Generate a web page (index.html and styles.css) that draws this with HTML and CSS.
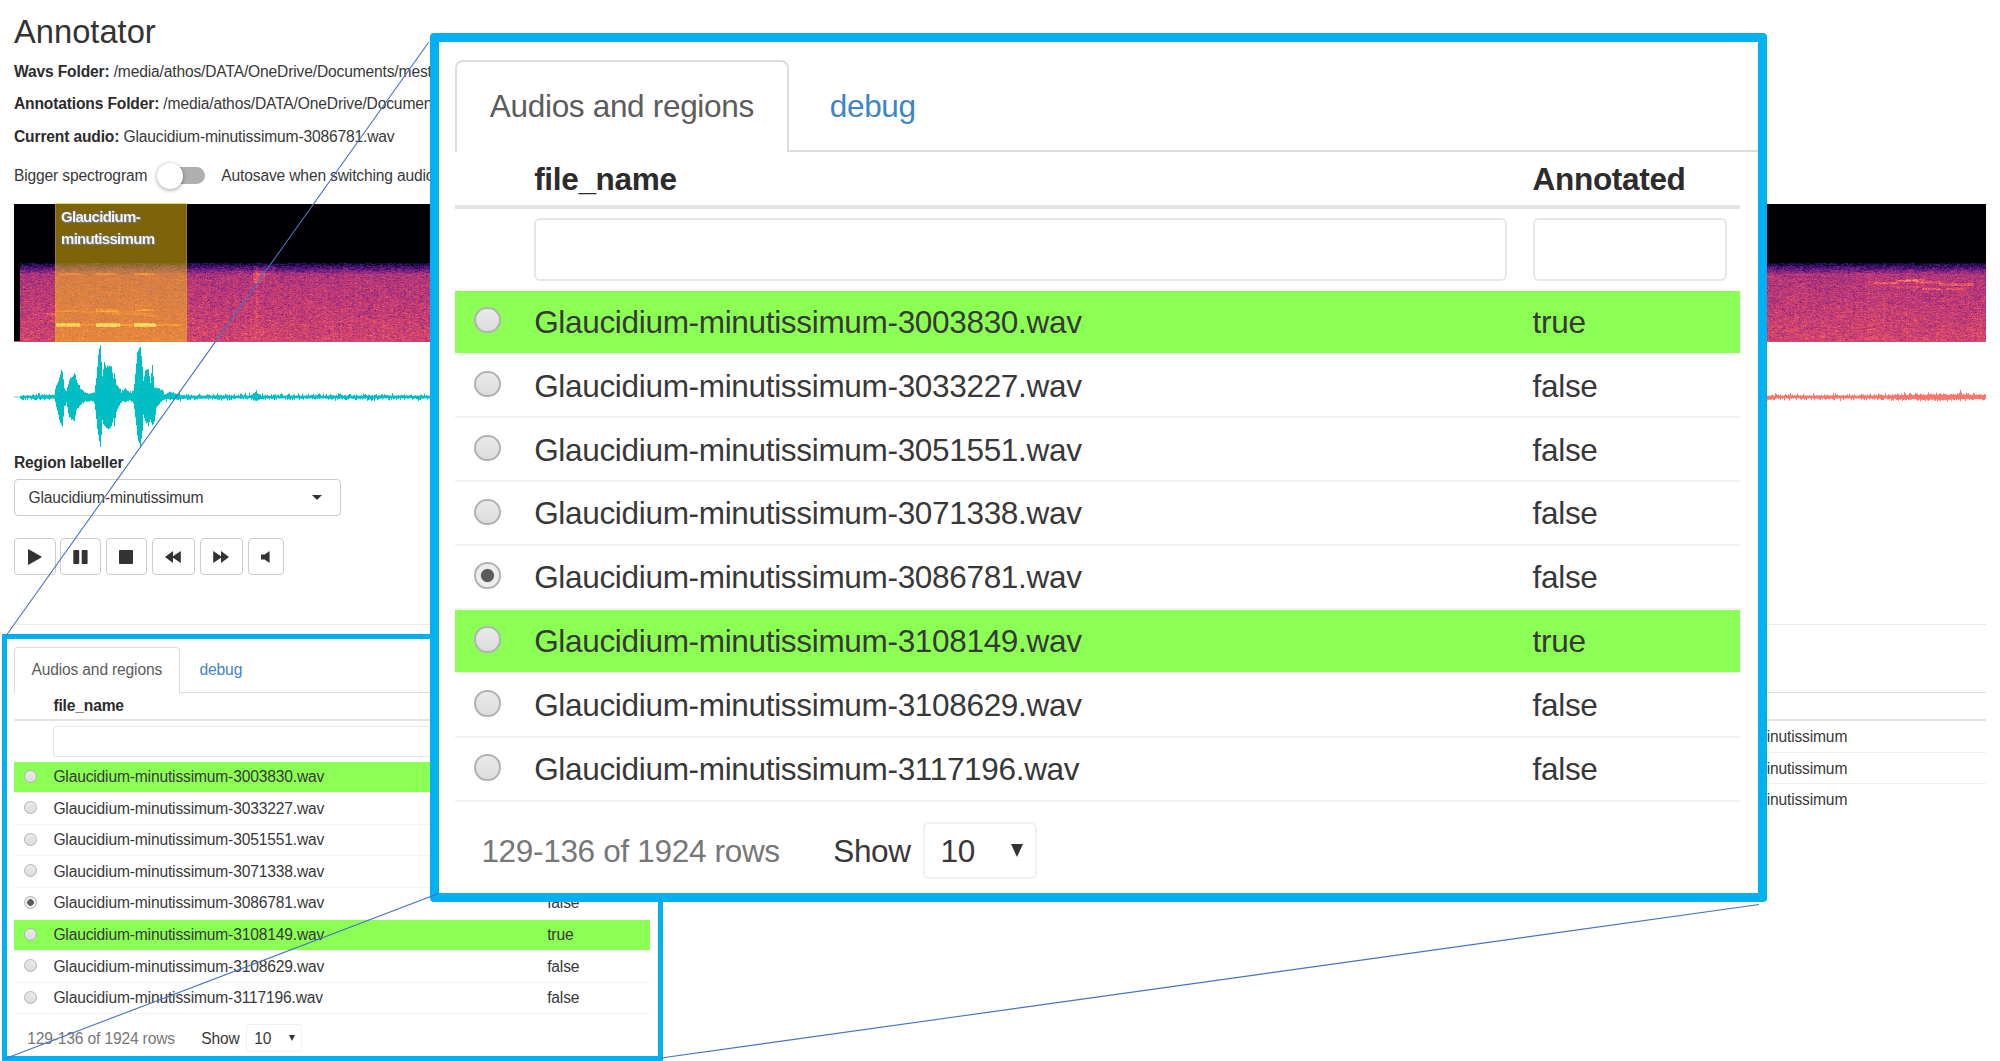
FILE: index.html
```html
<!DOCTYPE html>
<html lang="en">
<head>
<meta charset="utf-8">
<title>Annotator</title>
<link rel="stylesheet" href="styles.css">
</head>
<body>
<main class="page">
  <h1>Annotator</h1>
  <p class="info"><b>Wavs Folder:</b> /media/athos/DATA/OneDrive/Documents/mest</p>
  <p class="info"><b>Annotations Folder:</b> /media/athos/DATA/OneDrive/Documen</p>
  <p class="info"><b>Current audio:</b> Glaucidium-minutissimum-3086781.wav</p>
  <div class="toggles">
    <span>Bigger spectrogram</span>
    <span class="switch"><span class="knob"></span></span>
    <span class="autosave">Autosave when switching audio</span>
  </div>
  <div class="spectrogram">
    <canvas id="spectrogram" width="1972" height="138"></canvas>
    <div class="region">Glaucidium-<br>minutissimum</div>
  </div>
  <canvas id="waveform" class="waveform" width="1972" height="106"></canvas>
  <label class="labeller">Region labeller</label>
  <div class="picker"><span>Glaucidium-minutissimum</span><span class="caret"></span></div>
  <div class="controls">
    <button class="btn w1"><svg width="15" height="16" viewBox="0 0 15 16"><path d="M1 .5Q1 0 1.6.3L14.3 7.5Q15 8 14.3 8.5L1.6 15.7Q1 16 1 15.4Z"/></svg></button>
    <button class="btn w2"><svg width="15" height="14" viewBox="0 0 15 14"><rect x=".3" width="5.9" height="14" rx=".8"/><rect x="8.7" width="5.9" height="14" rx=".8"/></svg></button>
    <button class="btn w1"><svg width="14" height="14" viewBox="0 0 14 14"><rect width="14" height="14" rx=".8"/></svg></button>
    <button class="btn w3"><svg width="16" height="12" viewBox="0 0 16 12"><path d="M0 6 8 0V5.2L15.8 0V12L8 6.8V12Z"/></svg></button>
    <button class="btn w3"><svg width="16" height="12" viewBox="0 0 16 12"><path d="M16 6 8 0V5.2L.2 0V12L8 6.8V12Z"/></svg></button>
    <button class="btn w4"><svg width="9" height="12" viewBox="0 0 9 12"><path d="M0 3.4H3.6L8.6 0V12L3.6 8.6H0Z"/></svg></button>
  </div>
  <hr>
  <section class="panel main-panel">
    <div class="tabs"><span class="tab active">Audios and regions</span><span class="tab">debug</span></div>
    <div class="columns">
      <div class="audio-table">
        <div class="row head"><span></span><b>file_name</b><b>Annotated</b></div>
        <div class="row filter"><span></span><i class="field"></i><i class="field"></i></div>
        <div class="row item done"><i class="radio"></i><span>Glaucidium-minutissimum-3003830.wav</span><span>true</span></div>
        <div class="row item"><i class="radio"></i><span>Glaucidium-minutissimum-3033227.wav</span><span>false</span></div>
        <div class="row item"><i class="radio"></i><span>Glaucidium-minutissimum-3051551.wav</span><span>false</span></div>
        <div class="row item"><i class="radio"></i><span>Glaucidium-minutissimum-3071338.wav</span><span>false</span></div>
        <div class="row item"><i class="radio checked"></i><span>Glaucidium-minutissimum-3086781.wav</span><span>false</span></div>
        <div class="row item done"><i class="radio"></i><span>Glaucidium-minutissimum-3108149.wav</span><span>true</span></div>
        <div class="row item"><i class="radio"></i><span>Glaucidium-minutissimum-3108629.wav</span><span>false</span></div>
        <div class="row item"><i class="radio"></i><span>Glaucidium-minutissimum-3117196.wav</span><span>false</span></div>
        <div class="pager"><span class="count">129-136 of 1924 rows</span><span>Show</span><span class="size">10<i class="arrow"></i></span></div>
      </div>
      <div class="label-table">
        <div class="label-head"></div>
        <div class="label-row">inutissimum</div>
        <div class="label-row">inutissimum</div>
        <div class="label-row">inutissimum</div>
      </div>
    </div>
  </section>
</main>

<div class="marker"></div>

<div class="callout">
  <section class="panel zoomed">
    <div class="tabs"><span class="tab active">Audios and regions</span><span class="tab">debug</span></div>
    <div class="audio-table">
      <div class="row head"><span></span><b>file_name</b><b>Annotated</b></div>
      <div class="row filter"><span></span><i class="field"></i><i class="field"></i></div>
      <div class="row item done"><i class="radio"></i><span>Glaucidium-minutissimum-3003830.wav</span><span>true</span></div>
      <div class="row item"><i class="radio"></i><span>Glaucidium-minutissimum-3033227.wav</span><span>false</span></div>
      <div class="row item"><i class="radio"></i><span>Glaucidium-minutissimum-3051551.wav</span><span>false</span></div>
      <div class="row item"><i class="radio"></i><span>Glaucidium-minutissimum-3071338.wav</span><span>false</span></div>
      <div class="row item"><i class="radio checked"></i><span>Glaucidium-minutissimum-3086781.wav</span><span>false</span></div>
      <div class="row item done"><i class="radio"></i><span>Glaucidium-minutissimum-3108149.wav</span><span>true</span></div>
      <div class="row item"><i class="radio"></i><span>Glaucidium-minutissimum-3108629.wav</span><span>false</span></div>
      <div class="row item"><i class="radio"></i><span>Glaucidium-minutissimum-3117196.wav</span><span>false</span></div>
      <div class="pager"><span class="count">129-136 of 1924 rows</span><span>Show</span><span class="size">10<i class="arrow"></i></span></div>
    </div>
  </section>
</div>

<svg class="guides" width="2000" height="1061" viewBox="0 0 2000 1061">
  <path d="M5.5 636.5 428.5 42.5M5.5 1058.5 438.5 893.5M661 1058 1759 904.5"/>
</svg>
<script src="plots.js"></script>
</body>
</html>
```
FILE: styles.css
```css
* { box-sizing: border-box; }
html, body { height: 100%; }
body {
  margin: 0;
  position: relative;
  overflow: hidden;
  background: #fff;
  color: #383838;
  font: 15.6px/21.76px "Liberation Sans", Arial, sans-serif;
  letter-spacing: -.155px;
}
.page { padding: 13.9px 14px 0; height: 1061px; overflow: hidden; }
h1 { margin: 0 0 11px; font-size: 32.7px; line-height: 35.9px; font-weight: 400; letter-spacing: 0; color: #333; }
.info { margin: 0 0 10.88px; white-space: nowrap; }
b, .labeller { color: #2c2c2c; }

.toggles { display: flex; align-items: center; height: 27px; margin-top: 14.5px; white-space: nowrap; }
.switch { width: 41px; height: 17px; margin-left: 17px; border-radius: 9px; background: #b0b0b0; display: flex; align-items: center; }
.knob { flex: none; width: 26px; height: 26px; margin-left: -7px; border-radius: 50%; background: #fff; box-shadow: 0 1px 4px rgba(0, 0, 0, .4); }
.autosave { margin-left: 16px; }

.spectrogram { position: relative; height: 138px; margin-top: 14.6px; }
.spectrogram canvas, .waveform { display: block; }
.region {
  position: absolute; left: 40.5px; top: -1px; width: 132px; height: 139px;
  padding: 2px 5.5px;
  background: rgba(250, 200, 15, .5);
  border: solid rgba(220, 175, 20, .35); border-width: 1px 1px 0;
  color: #f4f4f4; font-weight: 700; font-size: 15px; letter-spacing: -.7px;
  text-shadow: 0 0 2px #666, 0 0 3px #777, 1px 1px 1px #888;
}
.waveform { margin-top: 2.3px; }

.labeller { display: block; margin-top: 2px; height: 27px; font-weight: 700; }
.picker { display: flex; align-items: center; justify-content: space-between; width: 327px; height: 37px; padding: 0 18px 0 13.5px; border: 1px solid #ccc; border-radius: 4px; }
.caret { border: 5.5px solid transparent; border-top-color: #333; border-bottom: 0; }
.controls { display: flex; gap: 4.6px; margin-top: 22px; }
.btn { display: flex; align-items: center; justify-content: center; height: 37px; padding: 0; border: 1px solid #ccc; border-radius: 4px; background: #fff; fill: #333; }
.w1 { width: 41.5px; }
.w2 { width: 41px; }
.w3 { width: 43.3px; }
.w4 { width: 36px; }
hr { margin: 49px 0 22px; height: 1px; border: 0; background: #eaeaea; }

/* File table, sized in multiples of --s so it can be shown at any scale */
.panel { --s: 1px; font-size: calc(15.6 * var(--s)); line-height: calc(21.76 * var(--s)); letter-spacing: -.0105em; white-space: nowrap; }
.tabs { display: flex; height: calc(45.5 * var(--s)); border-bottom: var(--s) solid #ddd; }
.tab { padding: calc(12 * var(--s)) calc(17 * var(--s)) 0; color: #3d85c6; }
.tab.active {
  width: calc(165.6 * var(--s)); margin-right: calc(3 * var(--s)); padding: calc(11 * var(--s)) 0 0 calc(16.5 * var(--s));
  border: var(--s) solid #ddd; border-bottom: 0;
  border-radius: calc(4 * var(--s)) calc(4 * var(--s)) 0 0;
  background: #fff; color: #5c5c5c; height: calc(45.5 * var(--s)); flex: none;
}
.audio-table { width: calc(636 * var(--s)); }
.row { display: grid; grid-template-columns: calc(39.4 * var(--s)) calc(493.8 * var(--s)) 1fr; }
.head { height: calc(28.5 * var(--s)); padding-top: calc(2.5 * var(--s)); border-bottom: calc(2 * var(--s)) solid #e3e3e3; }
.filter { height: calc(40.3 * var(--s)); padding-top: calc(4.5 * var(--s)); }
.field { height: calc(31 * var(--s)); margin-right: calc(12.5 * var(--s)); border: var(--s) solid #e6e6e6; border-radius: calc(3 * var(--s)); }
.field:last-child { margin-right: calc(6.5 * var(--s)); }
.item { height: calc(31.62 * var(--s)); padding-top: calc(4.5 * var(--s)); border-bottom: var(--s) solid #f2f2f2; }
.done { background: #8cff55; background-clip: padding-box; }
.radio {
  width: calc(13 * var(--s)); height: calc(13 * var(--s));
  margin: calc(3.5 * var(--s)) 0 0 calc(9.8 * var(--s));
  border: var(--s) solid #b2b2b2; border-radius: 50%;
  background: linear-gradient(#eaeaea, #dcdcdc);
}
.radio.checked { background: radial-gradient(circle, #5b5b5b 0 calc(3 * var(--s)), #ececec calc(3.5 * var(--s))); }
.pager { display: flex; align-items: center; height: calc(28 * var(--s)); margin-top: calc(10 * var(--s)); padding-left: calc(13.3 * var(--s)); }
.count { width: calc(174 * var(--s)); color: #777; }
.size { display: flex; align-items: center; justify-content: space-between; width: calc(56.5 * var(--s)); height: calc(28 * var(--s)); margin-left: calc(6 * var(--s)); padding: 0 calc(5.9 * var(--s)) 0 calc(7.7 * var(--s)); border: var(--s) solid #f0f0f0; border-radius: calc(3 * var(--s)); }
.arrow { border: calc(3.4 * var(--s)) solid transparent; border-top: calc(6.8 * var(--s)) solid #333; border-bottom: 0; }

.columns { display: flex; justify-content: space-between; }
.label-table { width: 318px; }
.label-head { height: 28.5px; border-bottom: 2px solid #e3e3e3; }
.label-row { height: 31.5px; padding: 5px 0 0 98.7px; border-bottom: 1px solid #f0f0f0; }
.label-row:last-child { border: 0; }

.marker { position: absolute; left: 2px; top: 634px; width: 661px; height: 427px; border: 5px solid #00b0f0; }
.callout {
  position: absolute; left: 430px; top: 33px; width: 1337px; height: 869px;
  padding: 17.5px 0 0 15.5px;
  border: 9px solid #00b0f0; border-radius: 4px; background: #fff; overflow: hidden;
}
.zoomed { --s: 2.022px; }
.guides { position: absolute; left: 0; top: 0; fill: none; stroke: #4472c4; stroke-width: 1.1; pointer-events: none; }
```
FILE: plots.js
```js
let seed = 7;
function rnd() {
  seed = (seed * 1664525 + 1013904223) >>> 0;
  return seed / 4294967296;
}

// Magma colour scale
const magma = [[0,0,4],[20,14,54],[59,15,112],[100,26,128],[140,41,129],[183,55,121],[222,73,104],[247,112,92],[254,159,109],[254,207,146],[252,253,191]];
function colour(v) {
  v = Math.max(0, Math.min(0.999, v)) * 10;
  const i = Math.floor(v), f = v - i;
  return magma[i].map((c, k) => c + (magma[i + 1][k] - c) * f);
}

// Bursts of energy: x, y, width, height, gain
const calls = [
  [42,119,24,4,.3],[82,119,24,4,.36],[120,119,22,4,.36],[42,120,126,2,.14],
  [44,69,21,2,.16],[82,69,20,2,.18],[120,69,20,2,.18],
  [42,106,22,2,.12],[82,105,22,3,.16],[121,105,18,2,.18],[121,101,16,1,.1],[33,109,10,2,.1],
  [66,107,60,2,.09],[98,109,42,2,.1],[130,111,12,2,.1],
  [239,67,12,12,.09],[241,56,3,80,.05],[239,62,22,9,.05],
  [1860,78,26,2,.14],[1882,76,22,2,.16],[1892,75,20,2,.14],[1902,77,25,3,.12],[1908,84,20,2,.13],[1925,79,36,3,.13],[1932,84,20,2,.12],[1875,82,30,2,.08],[1853,66,18,70,.025]
];

const sc = document.getElementById('spectrogram').getContext('2d');
const W = 1972, H = 138;
const img = sc.createImageData(W, H);
const columns = Array.from({ length: W }, () => (rnd() - .5) * .035);
let prev = 0;
for (let y = 0; y < H; y++) {
  for (let x = 0; x < W; x++) {
    let n = (rnd() + rnd() + rnd() - 1.5) * .13;
    n = n * .72 + prev * .35;
    prev = n;
    let v = 0;
    const t = (y - 59) / 11;
    if (x > 5 && y > 58) {
      v = t < 1 ? .1 + .38 * Math.max(0, t) + n * 1.2 : .485 + .085 * (y - 70) / 68 + n + columns[x];
      if (rnd() < .012) v -= .14;
      for (const c of calls) if (x >= c[0] && x < c[0] + c[2] && y >= c[1] && y < c[1] + c[3]) v += c[4] * (.7 + rnd() * .5);
    }
    if (y > 136) v = .58;
    const p = (y * W + x) * 4, rgb = colour(v);
    img.data[p] = rgb[0]; img.data[p + 1] = rgb[1]; img.data[p + 2] = rgb[2]; img.data[p + 3] = 255;
  }
}
sc.putImageData(img, 0, 0);

// Waveform envelope: x, height above the axis, depth below it
const env = [[0,.3,.3],[5,.3,.3],[7,1,1],[40,1.5,1.5],[42,10,8],[45,18,22],[47,26,27],[48,25,28],[50,8,9],[52,6,5],[55,16,18],[58,19,22],[60,23,24],[62,17,12],[64,11,10],[68,5,5],[74,3,3],[80,4,4],[82,18,22],[84,42,38],[86,50,50],[88,20,22],[90,33,28],[92,28,31],[95,31,31],[97,30,29],[99,18,20],[100,24,28],[102,12,14],[104,10,10],[107,4,4],[111,8,4],[115,4,3],[119,4,4],[121,22,18],[123,44,38],[126,50,50],[128,30,33],[129,14,16],[131,26,22],[134,27,27],[136,14,20],[138,32,28],[140,8,24],[142,9,9],[145,8,6],[150,2,2],[155,5,2],[165,2,2],[172,1.2,1.2],[238,1.2,1.2],[241,5,3],[247,1.2,2],[252,1.2,1.2],[1860,1.2,1.2],[1890,1.8,1.8],[1925,2.2,2.5],[1944,2,2],[1946,6,2],[1948,2,2],[1972,1.8,1.8]];
const wf = document.getElementById('waveform').getContext('2d');
let k = 0;
for (let x = 0; x < W; x++) {
  while (k < env.length - 2 && env[k + 1][0] <= x) k++;
  const a = env[k], b = env[k + 1], f = (x - a[0]) / (b[0] - a[0]);
  let up = a[1] + (b[1] - a[1]) * f, down = a[2] + (b[2] - a[2]) * f;
  if (x > 5) { up += rnd() * rnd() * 3; down += rnd() * rnd() * 3; }
  wf.fillStyle = x < 1000 ? '#00bfc4' : '#f8766d';
  wf.fillRect(x, 53 - up, 1, up + down);
}
```
